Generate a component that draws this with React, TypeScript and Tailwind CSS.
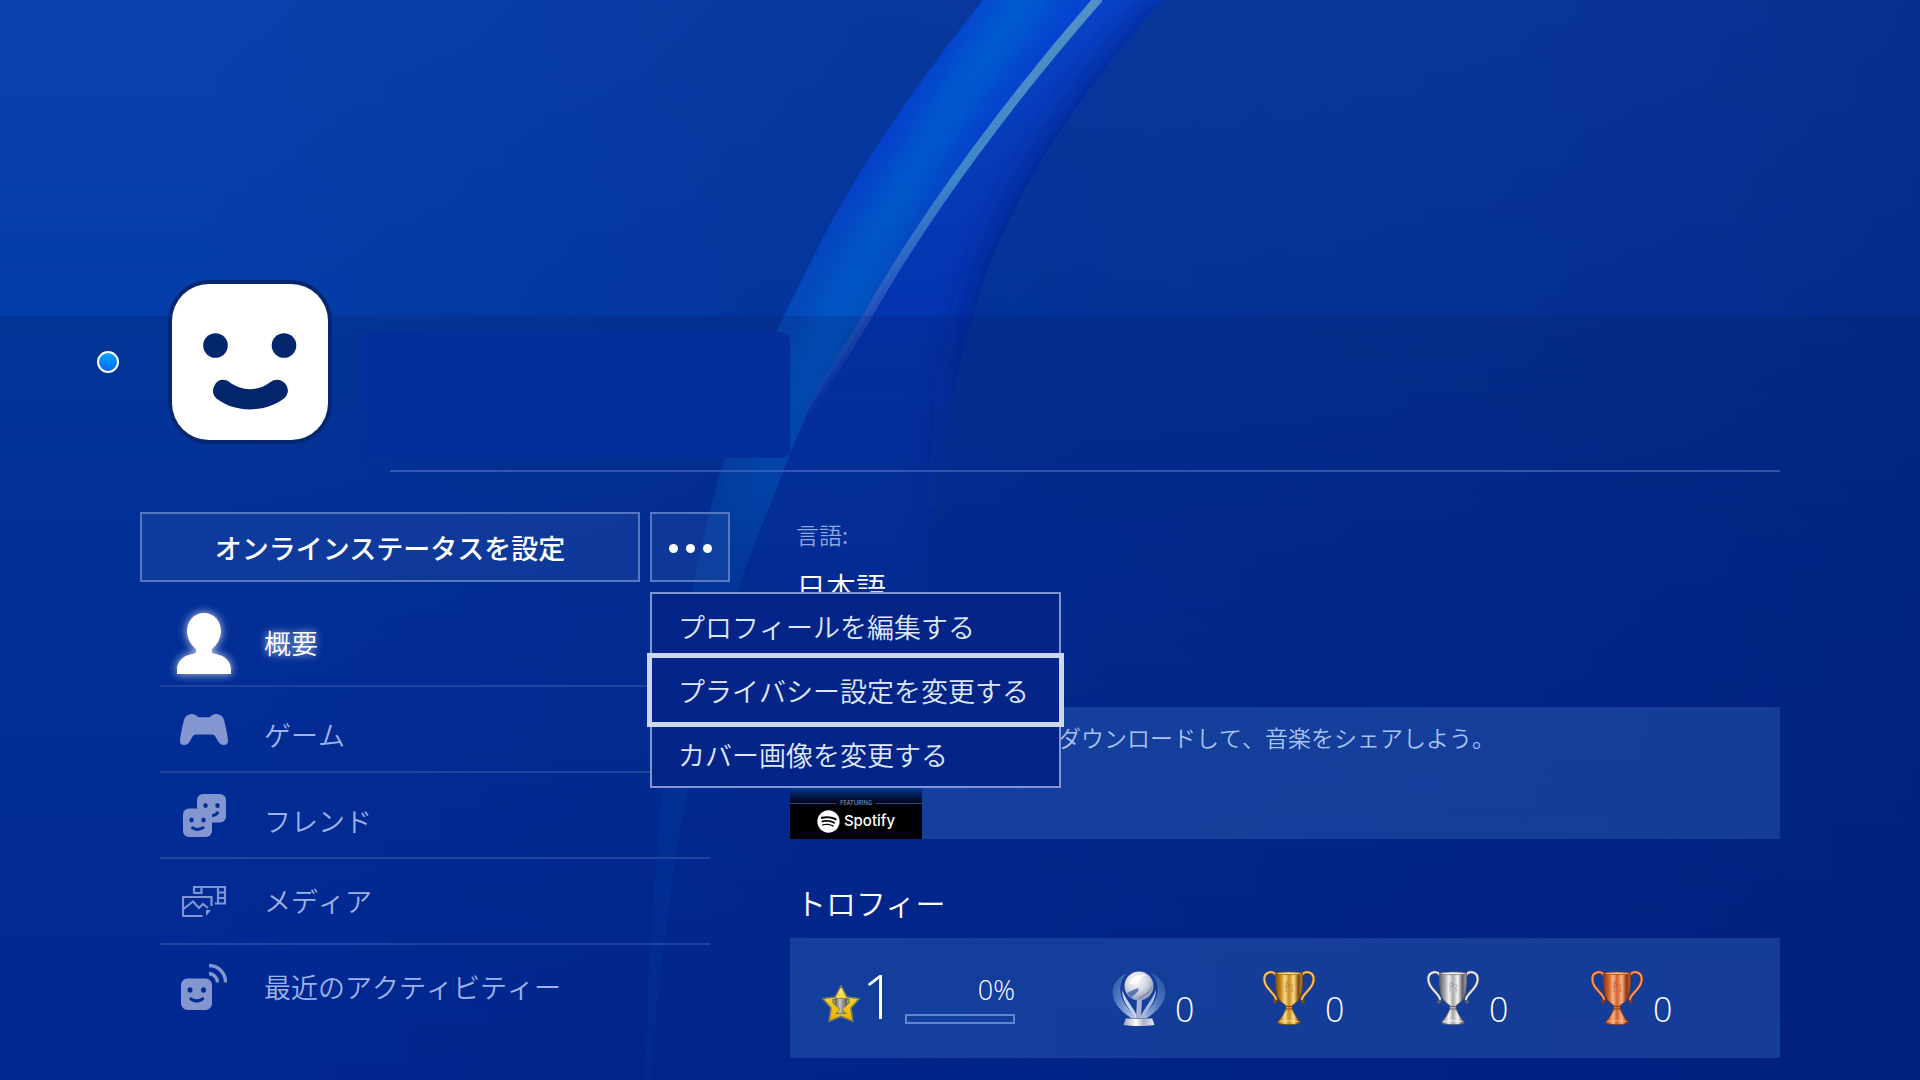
import React from 'react';
import { FaSpotify } from 'react-icons/fa';

const fontStack = "font-['Noto_Sans_CJK_JP',sans-serif]";
const numberFont = "font-['Open_Sans','Noto_Sans',sans-serif] font-light";

const Backdrop: React.FC = () => (
  <svg
    className="absolute inset-0 w-full h-full -z-10"
    viewBox="0 0 1920 1080"
    preserveAspectRatio="xMidYMin slice"
    aria-hidden="true"
  >
    <defs>
      <linearGradient id="sky" x1="0" y1="0" x2="0" y2="1">
        <stop offset="0" stopColor="#0a41ad" />
        <stop offset="0.29" stopColor="#043ca8" />
        <stop offset="0.5" stopColor="#02329d" />
        <stop offset="1" stopColor="#012791" />
      </linearGradient>
      <linearGradient id="shade" x1="0" y1="0" x2="1" y2="0">
        <stop offset="0.1" stopColor="#00186c" stopOpacity="0" />
        <stop offset="0.55" stopColor="#00186c" stopOpacity="0.28" />
        <stop offset="1" stopColor="#001566" stopOpacity="0.45" />
      </linearGradient>
      <radialGradient id="corner" gradientUnits="userSpaceOnUse" cx="1500" cy="-60" r="620">
        <stop offset="0" stopColor="#1c4fb0" stopOpacity="0.15" />
        <stop offset="1" stopColor="#1c4fb0" stopOpacity="0" />
      </radialGradient>
      <linearGradient id="bodyLeft" gradientUnits="userSpaceOnUse" x1="0" y1="0" x2="0" y2="1080">
        <stop offset="0" stopColor="#0545d0" />
        <stop offset="0.13" stopColor="#053fcc" />
        <stop offset="0.28" stopColor="#0548b8" />
        <stop offset="0.42" stopColor="#0349ae" stopOpacity="0.8" />
        <stop offset="0.55" stopColor="#0349ae" stopOpacity="0.4" />
        <stop offset="0.75" stopColor="#0349ae" stopOpacity="0.2" />
        <stop offset="1" stopColor="#0349ae" stopOpacity="0.12" />
      </linearGradient>
      <linearGradient id="bodyRight" gradientUnits="userSpaceOnUse" x1="0" y1="0" x2="0" y2="620">
        <stop offset="0" stopColor="#0843c8" />
        <stop offset="0.25" stopColor="#073bb8" />
        <stop offset="0.5" stopColor="#0434b0" />
        <stop offset="0.8" stopColor="#0431a4" stopOpacity="0.6" />
        <stop offset="1" stopColor="#0431a4" stopOpacity="0" />
      </linearGradient>
      <linearGradient id="glint" gradientUnits="userSpaceOnUse" x1="0" y1="0" x2="0" y2="440">
        <stop offset="0" stopColor="#5490c6" />
        <stop offset="0.4" stopColor="#3d86c8" />
        <stop offset="0.58" stopColor="#3a72c8" stopOpacity="0.8" />
        <stop offset="0.75" stopColor="#3355c0" stopOpacity="0.6" />
        <stop offset="1" stopColor="#2040b0" stopOpacity="0" />
      </linearGradient>
      <linearGradient id="stripe" gradientUnits="userSpaceOnUse" x1="0" y1="0" x2="0" y2="560">
        <stop offset="0" stopColor="#055ccf" />
        <stop offset="0.55" stopColor="#0456c6" />
        <stop offset="1" stopColor="#0459ca" stopOpacity="0" />
      </linearGradient>
      <linearGradient id="edge" gradientUnits="userSpaceOnUse" x1="0" y1="0" x2="0" y2="560">
        <stop offset="0" stopColor="#012392" stopOpacity="0.7" />
        <stop offset="0.5" stopColor="#012088" stopOpacity="0.8" />
        <stop offset="1" stopColor="#012088" stopOpacity="0" />
      </linearGradient>
      <clipPath id="clipLeft">
        <path d="M983 0C915 86 860 165 815 253C770 345 735 410 713 500C685 610 655 760 645 1080L650 1080C662 940 680 810 705 700C730 600 757 540 781 477C789 455 798 434 809 410C827 378 846 353 865 320C930 205 1020 88 1099 -2Z" />
      </clipPath>
      <clipPath id="clipRight">
        <path d="M1099 -2C1020 88 930 205 865 320C846 353 827 378 809 410C798 434 789 455 781 477C765 520 750 560 740 620H925C925 540 940 440 973 317C1000 210 1070 105 1162 0Z" />
      </clipPath>
      <filter id="soft" x="-20%" y="-20%" width="140%" height="140%">
        <feGaussianBlur stdDeviation="14" />
      </filter>
    </defs>
    <rect width="1920" height="1080" fill="url(#sky)" />
    <rect width="1920" height="1080" fill="url(#shade)" />
    <rect width="1920" height="600" fill="url(#corner)" />
    <g clipPath="url(#clipRight)">
      <rect x="700" width="500" height="640" fill="url(#bodyRight)" />
      <path
        d="M1172 0C1080 105 1010 210 983 317C950 440 935 540 935 640"
        fill="none"
        stroke="url(#edge)"
        strokeWidth="40"
        filter="url(#soft)"
      />
    </g>
    <g clipPath="url(#clipLeft)">
      <rect x="600" width="560" height="1080" fill="url(#bodyLeft)" />
      <path
        d="M1040 -20C990 50 940 120 901 193C860 260 800 370 750 540"
        fill="none"
        stroke="url(#stripe)"
        strokeWidth="44"
        filter="url(#soft)"
      />
    </g>
    <path
      d="M1099 -2C1020 88 930 205 865 320C846 353 827 378 809 410"
      fill="none"
      stroke="url(#glint)"
      strokeWidth="9"
    />
  </svg>
);

const Avatar: React.FC = () => (
  <svg className="size-[164px] -m-1" viewBox="-4 -4 164 164" role="img" aria-label="アバター">
    <rect x="-4" y="-4" width="164" height="164" rx="41" fill="#05276f" />
    <rect width="156" height="156" rx="37" fill="#fff" />
    <circle cx="43.500" cy="61.500" r="12.300" fill="#03256b" />
    <circle cx="112" cy="61.500" r="12.300" fill="#03256b" />
    <path
      d="M42.500 101.500C45 95.500 52 94 57.500 98C69 107.500 87 107.500 98.500 98C104 94 111 95.500 114.500 101.500C117 106 116 111 112 114.500C93 129 63 129 44.500 114.500C40.500 111 40 106 42.500 101.500Z"
      fill="#03256b"
    />
  </svg>
);

const PersonIcon: React.FC = () => (
  <svg
    className="w-[54px] h-[61px] overflow-visible drop-shadow-[0_0_5px_rgba(255,255,255,0.8)]"
    viewBox="0 0 54 61"
    fill="#fff"
  >
    <path d="M27 0C37 0 44 8 44 18.500C44 25 40 32 35 36V38.500C35 40.500 36 40.500 39 41C48 43 54 48 54 57V61H0V57C0 48 6 43 15 41C18 40.500 19 40.500 19 38.500V36C14 32 10 25 10 18.500C10 8 17 0 27 0Z" />
  </svg>
);

const GameIcon: React.FC = () => (
  <svg className="w-12 h-[31px]" viewBox="0 0 48 31" fill="#8496cf">
    <path d="M8 1C10 -0.200 13.500 -0.200 15.500 1C17 2 17.500 3.200 19.500 3.200H28.500C30.500 3.200 31 2 32.500 1C34.500 -0.200 38 -0.200 40 1C42 2 43.500 3.500 44 6C45.500 12 47.500 20 48 26.500C48.200 30 46.500 31 44 31C41 31 39.500 29.500 38 27C36 23.500 35 20.500 32 20.500H16C13 20.500 12 23.500 10 27C8.500 29.500 7 31 4 31C1.500 31 -0.200 30 0 26.500C0.500 20 2.500 12 4 6C4.500 3.500 6 2 8 1Z" />
  </svg>
);

const FriendsIcon: React.FC = () => (
  <svg className="size-[43px]" viewBox="0 0 43 43">
    <rect x="14" width="29" height="28.500" rx="6" fill="#8496cf" />
    <g fill="#032e98">
      <ellipse cx="22.500" cy="11.500" rx="2.200" ry="2.500" />
      <ellipse cx="34.500" cy="11.500" rx="2.200" ry="2.500" />
    </g>
    <path d="M30 21.500Q33 21 34.500 18.800" fill="none" stroke="#032e98" strokeWidth="3" strokeLinecap="round" />
    <rect y="14.500" width="29" height="28.500" rx="6" fill="#8496cf" />
    <g fill="#032e98">
      <ellipse cx="8.500" cy="26" rx="2.200" ry="2.500" />
      <ellipse cx="20.500" cy="26" rx="2.200" ry="2.500" />
    </g>
    <path d="M9.500 33.800Q14.500 37 20 33.800" fill="none" stroke="#032e98" strokeWidth="3" strokeLinecap="round" />
  </svg>
);

const MediaIcon: React.FC = () => (
  <svg className="w-11 h-[31px]" viewBox="0 0 44 31" fill="none" stroke="#7f95d6" strokeWidth="2.200">
    <path d="M12 7.500V1H43V17.500H33" />
    <path d="M12 7H19.500V1" />
    <path d="M36 1V17.500" />
    <path d="M36 6.500H43M36 12H43" />
    <path d="M20.500 30H1V11H29.500V20" />
    <path d="M1.500 23L11 15.500L17 22L21 18L26 22" />
    <path d="M24 24H29L24 30Z" fill="#7f95d6" stroke="none" />
  </svg>
);

const ActivityIcon: React.FC = () => (
  <svg className="size-[46px]" viewBox="0 0 46 46">
    <rect y="14.500" width="31" height="31.500" rx="6.500" fill="#8496cf" />
    <ellipse cx="9" cy="26" rx="2.500" ry="2.800" fill="#032a94" />
    <ellipse cx="22.500" cy="26" rx="2.500" ry="2.800" fill="#032a94" />
    <path d="M10 35Q15.500 39 21.500 35" fill="none" stroke="#032a94" strokeWidth="3.200" strokeLinecap="round" />
    <path d="M28 1.500A16.500 16.500 0 0 1 44.500 18.500M28 9.500A9 9 0 0 1 36.500 18.500" fill="none" stroke="#8496cf" strokeWidth="3.400" />
  </svg>
);

const StarIcon: React.FC = () => (
  <svg className="size-10" viewBox="0 0 40 40">
    <defs>
      <linearGradient id="starFill" x1="0" y1="0" x2="0" y2="1">
        <stop offset="0" stopColor="#fff27a" />
        <stop offset="0.45" stopColor="#f2cc20" />
        <stop offset="1" stopColor="#e6b000" />
      </linearGradient>
      <linearGradient id="starCup" x1="0" y1="0" x2="1" y2="0">
        <stop offset="0" stopColor="#5c5c5c" />
        <stop offset="0.4" stopColor="#c4c4c4" />
        <stop offset="1" stopColor="#555" />
      </linearGradient>
    </defs>
    <path
      d="M20 1.500L26 13L38.500 14.500L30 24L32 37.500L20 32.500L8 37.500L10 24L1.500 14.500L14 13Z"
      fill="url(#starFill)"
      stroke="#6c7568"
      strokeWidth="1.600"
      strokeLinejoin="round"
    />
    <path d="M14.500 15.500H12V18.500L15 21.500M25.500 15.500H28V18.500L25 21.500" fill="none" stroke="#777" strokeWidth="1.400" />
    <path d="M14 14.500H26V18.500C26 21.500 23.500 23.500 21.700 24.500V26L25 29.500H15L18.300 26V24.500C16.500 23.500 14 21.500 14 18.500Z" fill="url(#starCup)" stroke="#555" strokeWidth="0.500" />
  </svg>
);

const PlatinumIcon: React.FC = () => (
  <svg className="w-[54px] h-14" viewBox="0 0 54 56">
    <defs>
      <radialGradient id="globe" cx="0.4" cy="0.3" r="0.75">
        <stop offset="0" stopColor="#fff" />
        <stop offset="0.5" stopColor="#d4d8e2" />
        <stop offset="1" stopColor="#8790ab" />
      </radialGradient>
      <linearGradient id="wing" x1="0" y1="0" x2="1" y2="1">
        <stop offset="0" stopColor="#1d4f9e" />
        <stop offset="0.45" stopColor="#5a82c6" />
        <stop offset="1" stopColor="#c8d3f0" />
      </linearGradient>
      <linearGradient id="wingFar" x1="1" y1="0" x2="0" y2="1">
        <stop offset="0" stopColor="#2050a2" />
        <stop offset="0.5" stopColor="#4f78c0" />
        <stop offset="1" stopColor="#b4c4ea" />
      </linearGradient>
      <linearGradient id="foot" x1="0" y1="0" x2="1" y2="0">
        <stop offset="0" stopColor="#9aa5bf" />
        <stop offset="0.4" stopColor="#fff" />
        <stop offset="0.65" stopColor="#aab3c9" />
        <stop offset="1" stopColor="#e6eaf5" />
      </linearGradient>
    </defs>
    <path d="M15 3C4 8 -1 17 1 26C3 36 12 44 21 49L25 48C17 40 11 33 9 25C7 17 9 9 15 3Z" fill="url(#wing)" />
    <path d="M39 3C50 8 55 17 53 26C51 36 42 44 33 49L29 48C37 40 43 33 45 25C47 17 45 9 39 3Z" fill="url(#wingFar)" />
    <path d="M10 20C10 31 17 39 24 48H26C22 38 15 32 10 20Z" fill="#c9d4f2" />
    <path d="M44 20C44 31 37 39 30 48H28C32 38 39 32 44 20Z" fill="#a9b8e2" />
    <path d="M25 28H30L29 48H24Z" fill="#a7b3d6" />
    <circle cx="27" cy="16" r="14.500" fill="url(#globe)" />
    <path d="M19 28C23 23 28 22 26 18C22 20 18 21 15 23Z" fill="#5c75b8" />
    <path d="M28 28C35 26 40 21 41 14C38 21 33 25 26 27Z" fill="#7d8cb4" />
    <path d="M17 14C20 7 27 4 34 5C29 7 26 10 25 14Z" fill="#fff" opacity="0.8" />
    <path d="M14 48H40L42.500 55C34 56.500 20 56.500 11.500 55Z" fill="url(#foot)" />
    <path d="M14 48.500H40" stroke="#7483ab" strokeWidth="1" />
  </svg>
);

interface CupProps {
  id: string;
  dark: string;
  mid: string;
  light: string;
  handle: string;
}

const CupIcon: React.FC<CupProps> = ({ id, dark, mid, light, handle }) => (
  <svg className="w-[54px] h-14" viewBox="0 0 54 56">
    <defs>
      <linearGradient id={id} x1="0" y1="0" x2="1" y2="0">
        <stop offset="0" stopColor={dark} />
        <stop offset="0.2" stopColor={mid} />
        <stop offset="0.35" stopColor={light} />
        <stop offset="0.5" stopColor={mid} />
        <stop offset="0.68" stopColor={light} />
        <stop offset="0.85" stopColor={dark} />
        <stop offset="1" stopColor={mid} />
      </linearGradient>
    </defs>
    <g fill="none" strokeLinecap="round">
      <path d="M14 5C11 0.500 4 1.500 2.500 7C0.500 17 13 23 14 29C14.300 31 13.500 31.500 12.800 32" stroke={dark} strokeWidth="3.200" />
      <path d="M40 5C43 0.500 50 1.500 51.500 7C53.500 17 41 23 40 29C39.700 31 40.500 31.500 41.200 32" stroke={dark} strokeWidth="3.200" />
      <path d="M14 5C11 0.500 4 1.500 2.500 7C0.500 17 13 23 14 29" stroke={handle} strokeWidth="1.900" />
      <path d="M40 5C43 0.500 50 1.500 51.500 7C53.500 17 41 23 40 29" stroke={handle} strokeWidth="1.900" />
    </g>
    <path
      d="M13.500 3H40.500C40.500 12 40.500 20 38.500 26C36.500 31.500 32 34 30 35.500V38.500C32 44 35 48.500 38 51.500V53.500C32 55 22 55 16 53.500V51.500C19 48.500 22 44 24 38.500V35.500C22 34 17.500 31.500 15.500 26C13.500 20 13.500 12 13.500 3Z"
      fill={`url(#${id})`}
      stroke={dark}
      strokeWidth="0.800"
    />
    <ellipse cx="27" cy="3.300" rx="13" ry="1.300" fill={light} stroke={dark} strokeWidth="0.600" />
    <path d="M24 36.500H30M23.800 39H30.200" stroke={dark} strokeWidth="1" />
    <path d="M24 12V22M24 12L28 15L24 17M29 19C32 16 31 14 29 15M29 22C32 22 32 19 29 19" fill="none" stroke={dark} strokeWidth="0.600" opacity="0.600" />
    <path d="M17.500 51.500Q27 50 36.500 51.500" fill="none" stroke={light} strokeWidth="1.200" />
  </svg>
);

const navItems = [
  { label: '概要', icon: <PersonIcon />, active: true, low: false },
  { label: 'ゲーム', icon: <GameIcon />, active: false, low: true },
  { label: 'フレンド', icon: <FriendsIcon />, active: false, low: true },
  { label: 'メディア', icon: <MediaIcon />, active: false, low: false },
  { label: '最近のアクティビティー', icon: <ActivityIcon />, active: false, low: false },
];

const menuItems = [
  { label: 'プロフィールを編集する', focused: false },
  { label: 'プライバシー設定を変更する', focused: true },
  { label: 'カバー画像を変更する', focused: false },
];

const trophies = [
  { name: 'プラチナ', count: 0, width: 'w-[150px]', icon: <PlatinumIcon /> },
  {
    name: 'ゴールド',
    count: 0,
    width: 'w-[164px]',
    icon: <CupIcon id="gold" dark="#7d4a0c" mid="#c48a24" light="#fbdc86" handle="#f6c766" />,
  },
  {
    name: 'シルバー',
    count: 0,
    width: 'w-[164px]',
    icon: <CupIcon id="silver" dark="#606066" mid="#a8a8ac" light="#f6f6f6" handle="#e6ecf8" />,
  },
  {
    name: 'ブロンズ',
    count: 0,
    width: 'w-[100px]',
    icon: <CupIcon id="bronze" dark="#8e3610" mid="#d2612c" light="#fbb486" handle="#f79a66" />,
  },
];

const OptionsMenu: React.FC = () => (
  <ul className="absolute top-full left-0 z-10 mt-[10px] w-[411px] border-2 border-[#8295d3] bg-[#042587]">
    {menuItems.map((item) => (
      <li key={item.label}>
        <button
          type="button"
          className={`block w-full h-16 pt-0.5 px-[26px] text-left text-[27px] leading-8 font-[350] text-[#dfe8ff] whitespace-nowrap [font-kerning:none] ${
            item.focused ? 'relative outline-[5px] outline-solid outline-[#ced7f1]' : ''
          }`}
        >
          {item.label}
        </button>
      </li>
    ))}
  </ul>
);

const ProfileHeader: React.FC = () => (
  <header>
    <div className="flex items-start -mt-8 pl-[97px]">
      <span className="mt-[67px] size-[22px] rounded-full border-2 border-white bg-linear-to-b from-[#0aa5ff] to-[#0a68f5]"></span>
      <div className="ml-[53px] size-[156px]">
        <Avatar />
      </div>
      <div className="ml-[33px] mt-12 w-[429px] h-[126px] rounded-lg bg-[#042f9a]"></div>
    </div>
    <div className="mt-3 ml-[390px] mr-[140px] h-0.5 bg-[#4468b8]/70"></div>
  </header>
);

const Sidebar: React.FC = () => (
  <div className="w-[590px] shrink-0">
    <div className="flex gap-[10px]">
      <button
        type="button"
        className="w-[500px] h-[70px] pt-0.5 border-2 border-[#5578c0] bg-[#2a57a8]/30 text-[27px] font-medium text-white"
      >
        オンラインステータスを設定
      </button>
      <div className="relative">
        <button
          type="button"
          aria-label="その他"
          className="flex items-center justify-center gap-2 w-20 h-[70px] pt-0.5 border-2 border-[#5578c0] bg-[#2a57a8]/30"
        >
          <span className="size-[9px] rounded-full bg-white"></span>
          <span className="size-[9px] rounded-full bg-white"></span>
          <span className="size-[9px] rounded-full bg-white"></span>
        </button>
        <OptionsMenu />
      </div>
    </div>

    <nav className="mt-[19px] ml-5 w-[550px]">
      {navItems.map((item) => (
        <a
          key={item.label}
          href="#"
          className={`flex items-center gap-4 h-[86px] border-b-2 border-[#1f449f] last:border-transparent text-[27px] leading-8 [font-kerning:none] ${
            item.active
              ? 'text-white font-[350] [text-shadow:0_0_8px_rgba(255,255,255,0.8)]'
              : 'text-[#9db2e8] font-[350]'
          }`}
        >
          <span className="flex justify-center w-[88px] shrink-0">{item.icon}</span>
          <span className={item.low ? 'pt-3' : ''}>{item.label}</span>
        </a>
      ))}
    </nav>
  </div>
);

const SpotifyThumb: React.FC = () => (
  <div className="flex flex-col justify-end w-[132px] h-[132px] shrink-0 pb-1.5 bg-linear-to-b from-[#0a3fa0] from-60% to-black to-78%">
    <div className="flex items-center gap-1 text-[6px] leading-3 text-[#9aa8c0]">
      <span className="h-px flex-1 bg-[#2b4a80]"></span>
      FEATURING
      <span className="h-px flex-1 bg-[#2b4a80]"></span>
    </div>
    <div className="flex items-center justify-center gap-1 text-white">
      <FaSpotify className="size-[23px]" />
      <span className="font-['Inter',sans-serif] text-[15px] leading-6 font-medium">Spotify</span>
    </div>
  </div>
);

const TrophyPanel: React.FC = () => (
  <div className="flex items-center h-[120px] pl-[31px] bg-[#2454ac]/55 text-white">
    <div className="flex items-end w-[291px] shrink-0">
      <StarIcon />
      <span className={`w-9 pb-1 text-center text-[60px] leading-12 ${numberFont}`}>1</span>
      <div className="ml-2 flex flex-col items-end">
        <span className={`text-[27px] leading-9 ${numberFont}`}>0%</span>
        <div className="w-[110px] h-[10px] mt-1.5 border-2 border-[#5f86cf]"></div>
      </div>
    </div>
    {trophies.map((trophy) => (
      <div key={trophy.name} className={`flex items-end gap-[9px] shrink-0 ${trophy.width}`} title={trophy.name}>
        {trophy.icon}
        <span className={`pb-px text-[34px] leading-8 ${numberFont}`}>{trophy.count}</span>
      </div>
    ))}
  </div>
);

const App: React.FC = () => {
  return (
    <div className={`relative isolate min-h-screen overflow-hidden pt-[316px] bg-[#01258f] ${fontStack}`}>
      <Backdrop />

      <main className="flow-root min-h-[764px] bg-linear-to-b from-[#001a5c]/20 via-[#001a6c]/10 via-30% to-transparent">
        <ProfileHeader />

        <div className="flex gap-[60px] px-[140px] pt-10 pb-5">
          <Sidebar />

          <div className="flex-1 min-w-0">
            <dl className="mt-2.5 h-[185px]">
              <dt className="text-[23px] leading-6 font-[350] text-[#8fa6df]">
                <span className="pl-1.5">言語:</span>
              </dt>
              <dd className="mt-5 pl-1.5 text-[30px] leading-10 font-[350] text-white">日本語</dd>
            </dl>

            <section className="flex h-[132px] bg-[#2454ac]/55">
              <SpotifyThumb />
              <p className="pl-[136px] pt-3.5 text-[23px] leading-8 font-[350] text-[#a9c2f2] [font-kerning:none]">
                ダウンロードして、音楽をシェアしよう。
              </p>
            </section>

            <h2 className="mt-[46px] mb-[18px] pl-1.5 text-[30px] leading-[35px] font-[350] text-white">トロフィー</h2>
            <TrophyPanel />
          </div>
        </div>
      </main>
    </div>
  );
};

export default App;
